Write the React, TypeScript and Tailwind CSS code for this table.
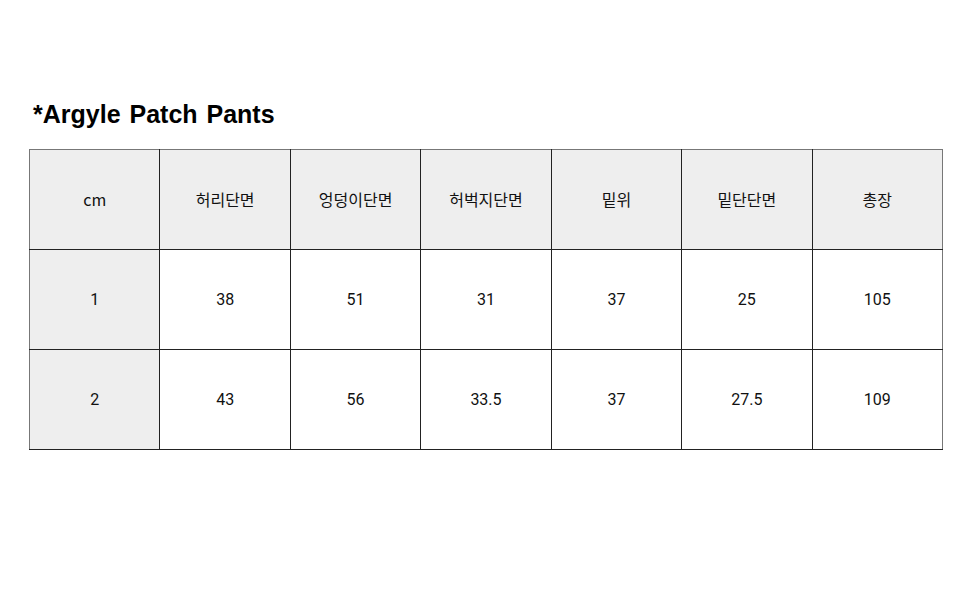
import React from "react";

const headers = ["cm", "허리단면", "엉덩이단면", "허벅지단면", "밑위", "밑단단면", "총장"];
const rows = [
  ["1", "38", "51", "31", "37", "25", "105"],
  ["2", "43", "56", "33.5", "37", "27.5", "109"],
];

export default function App() {
  return (
    <div
      className="w-[970px] h-[600px] bg-white text-[#111]"
      style={{ fontFamily: 'Roboto, "Noto Sans CJK KR", sans-serif' }}
    >
      <div className="pt-[98px] pl-[33px] h-[149px]">
        <h1
          className="text-[25px] font-bold leading-[32px] text-black [word-spacing:2px]"
          style={{ fontFamily: '"Liberation Sans", Arial, sans-serif' }}
        >
          *Argyle Patch Pants
        </h1>
      </div>
      <div className="pl-[29px]">
        <table className="border-collapse w-[914px] table-fixed text-[16px]">
          <tbody>
            <tr className="h-[100px]">
              {headers.map((h, i) => (
                <td
                  key={i}
                  className={`bg-[#eeeeee] border border-[#222] text-center align-middle pb-[2px] border-t-[#777] ${i === 0 ? "border-l-[#777]" : ""} ${i === 6 ? "border-r-[#777]" : ""}`}
                  style={{ fontFamily: '"Noto Sans CJK KR", Roboto, sans-serif' }}
                >
                  {h}
                </td>
              ))}
            </tr>
            {rows.map((r, ri) => (
              <tr key={ri} className="h-[100px]">
                {r.map((c, i) => (
                  <td
                    key={i}
                    className={`${i === 0 ? "bg-[#eeeeee] border-l-[#777]" : "bg-white"} ${i === 6 ? "border-r-[#777]" : ""} border border-[#222] text-center align-middle`}
                  >
                    {c}
                  </td>
                ))}
              </tr>
            ))}
          </tbody>
        </table>
      </div>
    </div>
  );
}
